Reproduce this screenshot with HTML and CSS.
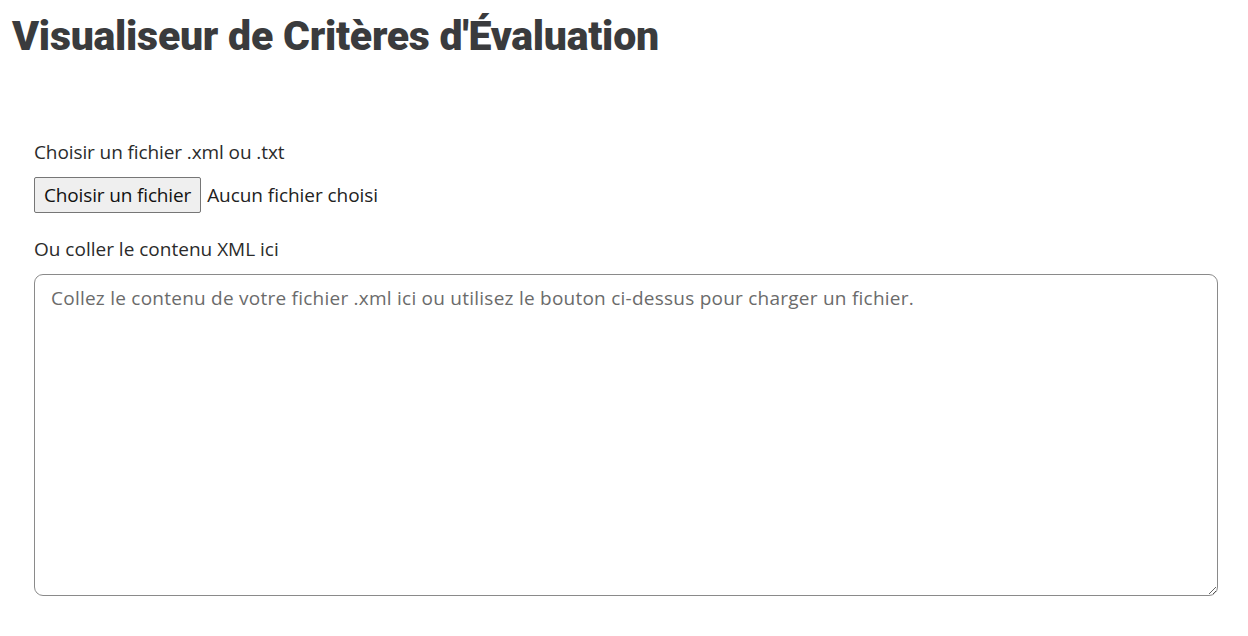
FILE: index.html
```html
<!DOCTYPE html>
<html lang="fr">
<head>
<meta charset="utf-8">
<title>Visualiseur de Critères d'Évaluation</title>
<link rel="stylesheet" href="styles.css">
</head>
<body>
<h1 class="title">Visualiseur de Critères d'Évaluation</h1>
<section class="panel">
  <label class="label" for="file">Choisir un fichier .xml ou .txt</label>
  <div class="file-row">
    <button class="file-btn" id="file" type="button">Choisir un fichier</button>
    <span class="file-name">Aucun fichier choisi</span>
  </div>
  <label class="label label-xml" for="xml">Ou coller le contenu XML ici</label>
  <textarea class="xml-input" id="xml" placeholder="Collez le contenu de votre fichier .xml ici ou utilisez le bouton ci-dessus pour charger un fichier."></textarea>
</section>
</body>
</html>
```

FILE: styles.css
```css
html, body {
  margin: 0;
  padding: 0;
  background: #ffffff;
}
body {
  padding: 0 12px;
  font-family: "Open Sans", "Noto Sans", sans-serif;
  color: #2b2b2b;
}
.title {
  margin: 0;
  padding-top: 10px;
  font-family: "Roboto", "Inter", sans-serif;
  font-weight: 900;
  font-size: 41px;
  line-height: 52px;
  letter-spacing: -0.25px;
  color: #3a3b3d;
}
.panel {
  display: flex;
  flex-direction: column;
  align-items: flex-start;
  padding: 78px 18px 0 22px;
}
.label {
  font-size: 19px;
  line-height: 24px;
  letter-spacing: -0.1px;
  color: #2b2b2b;
  margin-bottom: 13px;
}
.label-xml {
  letter-spacing: 0px;
}
.file-row {
  display: flex;
  align-items: center;
  gap: 6px;
  margin-bottom: 24px;
}
.file-btn {
  height: 36px;
  padding: 0 9px;
  font-family: inherit;
  font-size: 19px;
  letter-spacing: -0.15px;
  color: #111;
  background: #efefef;
  border: 1px solid #767676;
  border-radius: 2px;
}
.file-name {
  font-size: 19px;
  letter-spacing: -0.05px;
  color: #222;
}
.xml-input {
  box-sizing: border-box;
  width: 100%;
  height: 322px;
  padding: 11px 16px;
  font-family: inherit;
  font-size: 19px;
  line-height: 24px;
  letter-spacing: 0.24px;
  color: #333;
  border: 1px solid #8a8a8a;
  border-radius: 9px;
  resize: vertical;
}
.xml-input::placeholder {
  color: #6b6b6b;
}
```
